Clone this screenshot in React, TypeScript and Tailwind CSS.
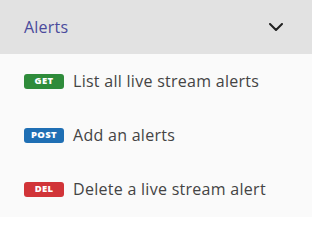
import React from "react";

const rows = [
  { method: "GET", label: "List all live stream alerts", cls: "bg-[#2e8b3a]" },
  { method: "POST", label: "Add an alerts", cls: "bg-[#1f6fb4]" },
  { method: "DEL", label: "Delete a live stream alert", cls: "bg-[#d13438]" },
];

export default function App() {
  return (
    <div className="w-[312px] h-[217px] bg-[#fafafa] overflow-hidden" style={{ fontFamily: '"Open Sans", sans-serif' }}>
      <div className="h-[54px] bg-[#e2e2e2] flex items-center justify-between pl-6 pr-[29px]">
        <span className="text-[16px] text-[#4a4a9c] leading-none tracking-[0.2px]">Alerts</span>
        <svg width="14" height="8" viewBox="0 0 14 8" fill="none">
          <path d="M1 1l6 6 6-6" stroke="#222" strokeWidth="2" strokeLinecap="round" strokeLinejoin="round" />
        </svg>
      </div>
      {rows.map((r) => (
        <div key={r.method} className="h-[54px] flex items-center pl-6">
          <span className={`${r.cls} w-10 h-[15px] rounded-[3px] flex items-center justify-center text-white text-[9.5px] font-extrabold leading-none tracking-[0.3px]`}>
            {r.method}
          </span>
          <span className="ml-[9px] text-[16px] text-[#444] leading-none tracking-[0.28px]">{r.label}</span>
        </div>
      ))}
    </div>
  );
}
